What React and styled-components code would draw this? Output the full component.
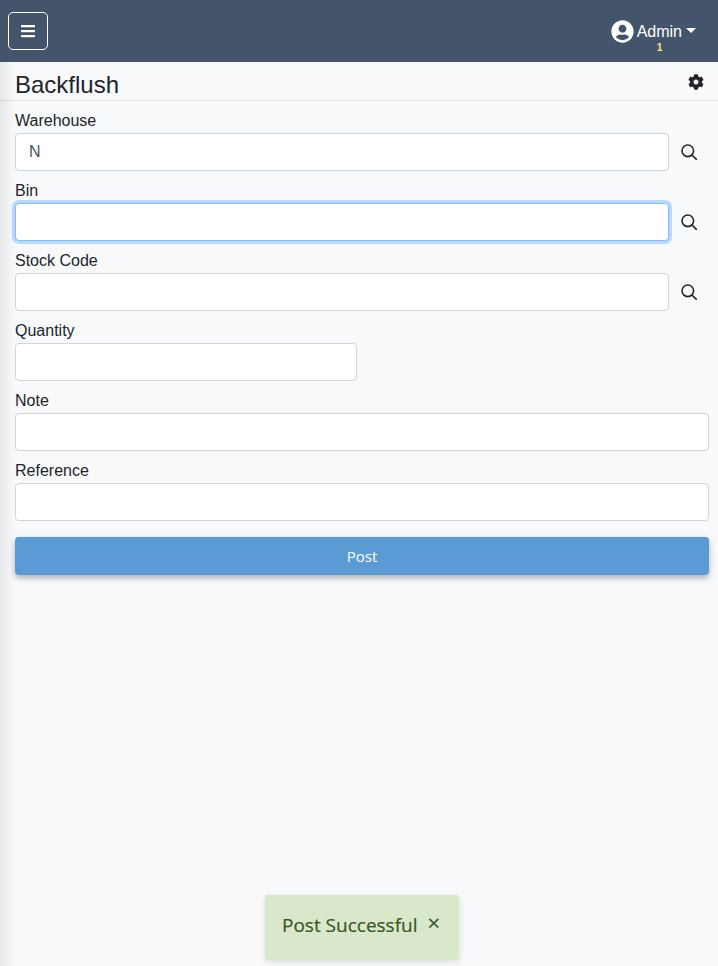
import React from 'react';
import styled, { createGlobalStyle } from 'styled-components';
import { FaBars, FaCog, FaUserCircle } from 'react-icons/fa';

const GlobalStyle = createGlobalStyle`
  html, body {
    margin: 0;
    height: 100%;
    background: #f8f9fb;
    color: #212529;
    font-family: "Liberation Sans", Arial, sans-serif;
    font-size: 16px;
  }
  * { box-sizing: border-box; }
`;

const Page = styled.div`
  position: relative;
  width: 718px;
  height: 966px;
  overflow: hidden;
`;

const NavBar = styled.header`
  height: 62px;
  background: #44546a;
  display: flex;
  align-items: center;
  justify-content: space-between;
  padding: 0 22px 0 8px;
`;

const MenuButton = styled.button`
  width: 40px;
  height: 38px;
  padding: 0;
  background: transparent;
  border: 1px solid #fff;
  border-radius: 5px;
  color: #fff;
  display: flex;
  align-items: center;
  justify-content: center;
  font-size: 16px;
`;

const UserMenu = styled.div`
  position: relative;
  display: flex;
  align-items: center;
  color: #fff;
  line-height: 24px;
`;

const UserName = styled.span`
  margin-left: 3px;
  margin-top: 2px;
`;

const Caret = styled.span`
  margin-left: 4px;
  margin-top: -1px;
  border-top: 5px solid #fff;
  border-left: 5px solid transparent;
  border-right: 5px solid transparent;
`;

const Badge = styled.span`
  position: absolute;
  left: 46px;
  top: 24px;
  color: #ffe082;
  font-size: 10px;
  font-weight: 700;
  line-height: 12px;
`;

const TitleBar = styled.div`
  height: 39px;
  padding: 0 14px 0 15px;
  border-bottom: 1px solid #dee2e6;
  display: flex;
  justify-content: space-between;
`;

const Title = styled.h1`
  margin: 8px 0 0;
  font-size: 24px;
  font-weight: 400;
  line-height: 29px;
`;

const SettingsIcon = styled(FaCog)`
  margin-top: 12px;
  font-size: 16px;
  color: #212529;
`;

const Form = styled.form`
  padding: 7px 9px 0 15px;
  display: flex;
  flex-direction: column;
  gap: 7px;
`;

const Field = styled.div`
  display: flex;
  flex-direction: column;
`;

const Label = styled.label`
  height: 25px;
  padding-top: 1px;
  line-height: 24px;
`;

const Row = styled.div`
  display: flex;
  align-items: center;
`;

const Input = styled.input`
  width: ${({ $width }) => $width || '100%'};
  height: 38px;
  padding: 6px 13px;
  background: #fff;
  border: 1px solid #ced4da;
  border-radius: 4px;
  color: #495057;
  font: inherit;
  outline: none;

  &:focus {
    border-color: #80bdff;
    box-shadow: 0 0 0 3px rgba(0, 123, 255, 0.25);
  }
`;

const SearchButton = styled.button`
  flex: none;
  width: 40px;
  height: 38px;
  padding: 0;
  background: transparent;
  border: 0;
  color: #212529;
  display: flex;
  align-items: center;
  justify-content: center;
`;

const PostButton = styled.button`
  height: 38px;
  margin-top: 9px;
  background: #5b9bd5;
  border: 0;
  border-radius: 4px;
  box-shadow: 0 3px 6px rgba(0, 0, 0, 0.3);
  color: #fff;
  font-family: "Open Sans", "Noto Sans", sans-serif;
  font-size: 15px;
`;

const SideShadow = styled.div`
  position: absolute;
  left: 0;
  top: 62px;
  bottom: 0;
  width: 16px;
  background: linear-gradient(to right, rgba(0, 0, 0, 0.08), rgba(0, 0, 0, 0.03) 50%, rgba(0, 0, 0, 0));
  pointer-events: none;
`;

const Toast = styled.div`
  position: absolute;
  left: 265px;
  top: 895px;
  width: 194px;
  height: 65px;
  padding: 17px 0 0 17px;
  background: #d9e8ca;
  border-radius: 3px;
  box-shadow: 0 2px 6px rgba(0, 0, 0, 0.12);
  color: #38571f;
  font-family: "Open Sans", "Noto Sans", sans-serif;
  font-size: 19px;
  line-height: 26px;
  -webkit-text-stroke: 0.2px #38571f;
  display: flex;
`;

const ToastClose = styled.span`
  margin-left: 10px;
  margin-top: -3px;
  font-size: 22px;
`;

const SearchIcon = () => (
  <svg width="16" height="16" viewBox="0 0 16 16" fill="none" stroke="currentColor" strokeWidth="1.6">
    <circle cx="6.8" cy="6.8" r="5.8" />
    <path d="M11 11 15.4 15.4" strokeLinecap="round" />
  </svg>
);

const LookupField = ({ label, value, autoFocus }) => (
  <Field>
    <Label>{label}</Label>
    <Row>
      <Input defaultValue={value} autoFocus={autoFocus} />
      <SearchButton type="button"><SearchIcon /></SearchButton>
    </Row>
  </Field>
);

const TextField = ({ label, width }) => (
  <Field>
    <Label>{label}</Label>
    <Row>
      <Input $width={width} />
    </Row>
  </Field>
);

const App = () => (
  <Page>
    <GlobalStyle />
    <NavBar>
      <MenuButton type="button"><FaBars /></MenuButton>
      <UserMenu>
        <FaUserCircle size={23} />
        <UserName>Admin</UserName>
        <Caret />
        <Badge>1</Badge>
      </UserMenu>
    </NavBar>
    <TitleBar>
      <Title>Backflush</Title>
      <SettingsIcon />
    </TitleBar>
    <Form onSubmit={(e) => e.preventDefault()}>
      <LookupField label="Warehouse" value="N" />
      <LookupField label="Bin" autoFocus />
      <LookupField label="Stock Code" />
      <TextField label="Quantity" width="342px" />
      <TextField label="Note" />
      <TextField label="Reference" />
      <PostButton type="submit">Post</PostButton>
    </Form>
    <SideShadow />
    <Toast>
      Post Successful
      <ToastClose>×</ToastClose>
    </Toast>
  </Page>
);

export default App;
